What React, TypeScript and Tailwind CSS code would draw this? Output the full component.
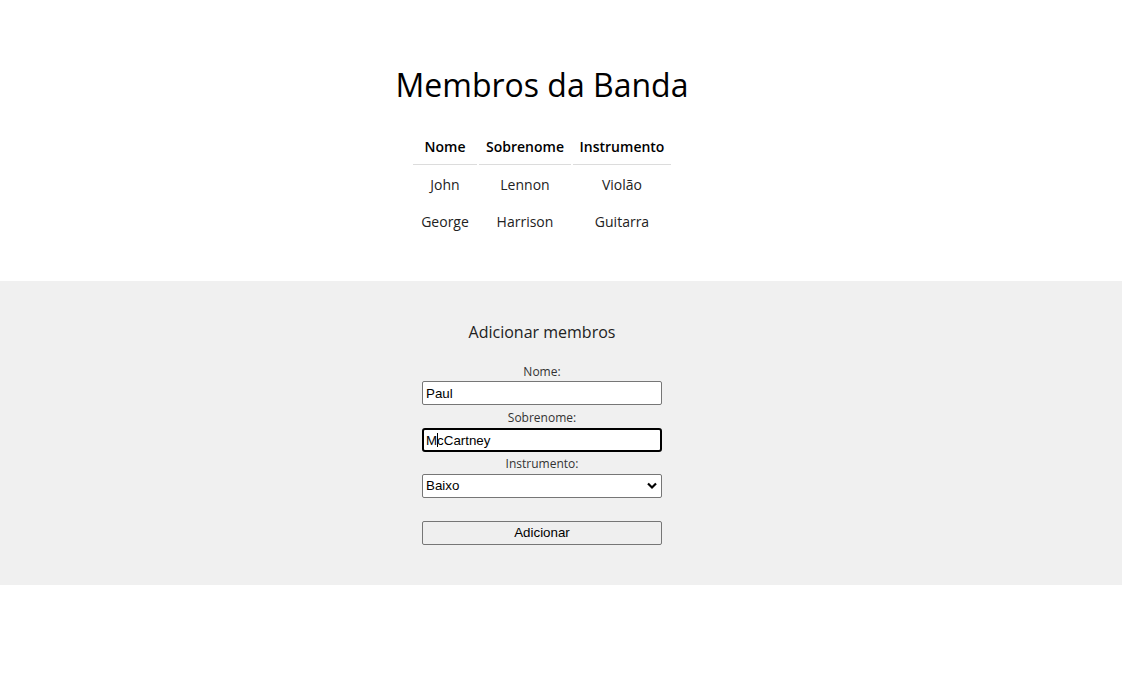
const members = [
  { nome: 'John', sobrenome: 'Lennon', instrumento: 'Violão' },
  { nome: 'George', sobrenome: 'Harrison', instrumento: 'Guitarra' },
];

export default function App() {
  return (
    <div className="min-h-[696px] bg-white font-['Open_Sans',sans-serif] text-black">
      {/* Lista */}
      <div className="w-[1084px] flex flex-col items-center pt-[63px] pb-[40px]">
        <h1 className="text-[32px] leading-[44px] font-medium mb-[20px]">Membros da Banda</h1>
        <table className="border-separate border-spacing-[2px] text-[14px] leading-[19px] text-[#222]">
          <thead>
            <tr>
              <th className="w-[64px] py-2 font-semibold text-black border-b border-[#dcdcdc]">Nome</th>
              <th className="w-[92px] py-2 font-semibold text-black border-b border-[#dcdcdc]">Sobrenome</th>
              <th className="w-[98px] py-2 font-semibold text-black border-b border-[#dcdcdc]">Instrumento</th>
            </tr>
          </thead>
          <tbody>
            {members.map((m) => (
              <tr key={m.nome}>
                <td className="py-2 text-center">{m.nome}</td>
                <td className="py-2 text-center">{m.sobrenome}</td>
                <td className="py-2 text-center">{m.instrumento}</td>
              </tr>
            ))}
          </tbody>
        </table>
      </div>

      {/* Formulário */}
      <div className="w-full bg-[#f0f0f0]">
        <div className="w-[1084px] flex flex-col items-center pt-[40px] pb-[40px]">
          <h2 className="text-[16px] leading-[22px] text-[#222] mb-[21px]">Adicionar membros</h2>
          <form className="flex flex-col items-center w-[240px]">
            <label className="block text-[12px] leading-[16px] text-[#333] mb-[1px]">Nome:</label>
            <input
              readOnly
              value="Paul"
              className="block w-[240px] h-[24px] bg-white border border-[#767676] rounded-[2px] px-[3px] font-['Liberation_Sans',Arial,sans-serif] text-[13.33px] text-black outline-none"
            />
            <label className="block text-[12px] leading-[16px] text-[#333] mt-[5px] mb-[2px]">Sobrenome:</label>
            <div className="relative w-[240px] h-[24px]">
              <input
                readOnly
                value="McCartney"
                className="block w-[240px] h-[24px] bg-white border-2 border-black rounded-[3px] px-[2px] font-['Liberation_Sans',Arial,sans-serif] text-[13.33px] text-black outline-none"
              />
              <span className="absolute left-[15px] top-[5px] w-px h-[14px] bg-black" />
            </div>
            <label className="block text-[12px] leading-[16px] text-[#333] mt-[4px] mb-[2px]">Instrumento:</label>
            <div className="relative w-[240px] h-[24px]">
              <select
                defaultValue="Baixo"
                className="block appearance-none w-[240px] h-[24px] bg-white border border-[#767676] rounded-[2px] pl-[3px] font-['Liberation_Sans',Arial,sans-serif] text-[13.33px] text-black outline-none"
              >
                <option>Violão</option>
                <option>Guitarra</option>
                <option>Baixo</option>
                <option>Bateria</option>
              </select>
              <svg
                className="absolute right-[5px] top-[8px] pointer-events-none"
                width="10"
                height="8"
                viewBox="0 0 10 8"
              >
                <path d="M1 1.5 L5 5.5 L9 1.5" fill="none" stroke="#000" strokeWidth="2.2" />
              </svg>
            </div>
            <button
              type="button"
              className="block mt-[23px] w-[240px] h-[24px] bg-[#efefef] border border-[#767676] rounded-[2px] font-['Liberation_Sans',Arial,sans-serif] text-[13.33px] text-black"
            >
              Adicionar
            </button>
          </form>
        </div>
      </div>
    </div>
  );
}
